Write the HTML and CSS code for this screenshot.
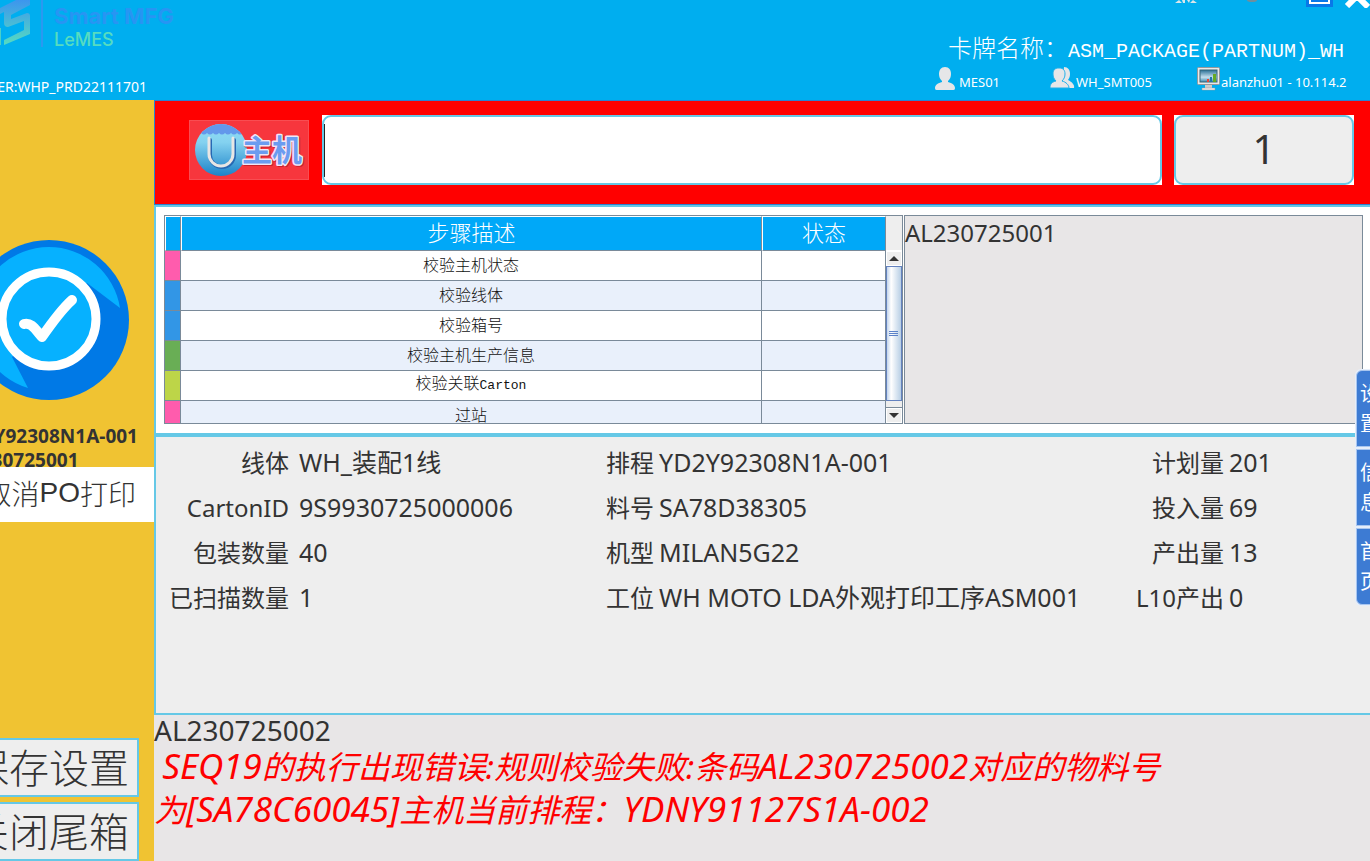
FILE: index.html
```html
<!DOCTYPE html>
<html lang="zh-CN">
<head>
<meta charset="utf-8">
<title>LeMES</title>
<link rel="stylesheet" href="styles.css">
</head>
<body>
<div class="app">
  <header class="header">
    <div class="brand">
      <div class="logo">
        <svg class="logo-mark" width="44" height="48" viewBox="0 0 44 48" aria-hidden="true">
          <defs><linearGradient id="lg" x1="0" y1="0" x2="0" y2="1"><stop offset="0" stop-color="#3a8ff2"/><stop offset="1" stop-color="#56dcc0"/></linearGradient></defs>
          <path d="M0 8 24 -4 30 0V5L11 15V19L27 13Q30 13 30 16V34L4 45V40L24 30V21L8 27Q4 27 4 23V12L0 14z" fill="url(#lg)"/>
          <path d="M0 28V45" stroke="#4bcfc8" stroke-width="2"/>
          <path d="M42 0V47" stroke="#2b98f0" stroke-width="2"/>
        </svg>
        <div class="logo-text"><span class="logo-top">Lenovo</span><span class="logo-top">Smart MFG</span><span class="logo-sub">LeMES</span></div>
      </div>
      <div class="server"><span>SERVER:WHP_PRD22111701</span></div>
    </div>
    <div class="status">
      <div class="window-tools">
        <button class="tool" aria-label="设置"><svg width="24" height="8" viewBox="0 0 24 8"><path d="M1 3 5 0 8 3zM8 0h3v3H9zM13 0h3l-1 3zM16 3l3-3 4 3z" fill="#dce6ea"/></svg></button>
        <button class="tool" aria-label="最小化"><svg width="24" height="8" viewBox="0 0 24 8"><ellipse cx="12" cy="0" rx="5" ry="2" fill="#6f8e9c"/></svg></button>
        <button class="tool" aria-label="最大化"><svg width="28" height="8" viewBox="0 0 28 8"><path d="M0 0H27V7H0z" fill="#0878e8"/><path d="M4 0V3H23V0" fill="none" stroke="#fff" stroke-width="2"/></svg></button>
        <button class="tool" aria-label="关闭"><svg width="26" height="8" viewBox="0 0 26 8"><path d="M3 6 13 -4 24 7" fill="none" stroke="#fff" stroke-width="6"/></svg></button>
      </div>
      <h1 class="card-name">卡牌名称：<span class="mono">ASM_PACKAGE(PARTNUM)_WH</span></h1>
      <ul class="session">
        <li class="user"><svg width="20" height="24" viewBox="0 0 20 24"><path d="M10 0c4 0 6 3 6 7 0 3-1 5-3 7v1c4 1 7 3 7 6 0 2-1 2-3 2H3c-2 0-3 0-3-2 0-3 3-5 7-6v-1C5 12 4 10 4 7c0-4 2-7 6-7z" fill="#e6e6e8"/></svg>MES01</li>
        <li class="group"><svg width="25" height="24" viewBox="0 0 25 24"><path d="M14 0c4 0 6 3 6 7 0 3-1 4-2 6 4 2 7 5 6 8H12z" fill="#e6e6e8"/><path d="M9 1c4 0 6 2 6 6 0 3-1 5-3 7 4 1 7 4 7 7H0c0-4 2-6 6-7-2-2-3-4-3-7 0-4 2-6 6-6z" fill="#e6e6e8" stroke="#20b0ea" stroke-width="1"/></svg>WH_SMT005</li>
        <li class="host"><svg width="23" height="24" viewBox="0 0 23 24"><defs><linearGradient id="mon" x1="0" y1="0" x2="0" y2="1"><stop offset="0" stop-color="#286f96"/><stop offset=".6" stop-color="#c6e0ee"/><stop offset="1" stop-color="#3c89b0"/></linearGradient></defs><path d="M8 18h7v4H8z" fill="#ccc"/><path d="M5 21h13v2H5z" fill="#eee" stroke="#999" stroke-width=".5"/><rect x=".5" y=".5" width="22" height="17" rx="1" fill="#e9e9e9" stroke="#96999c"/><rect x="3" y="3" width="17" height="12" fill="url(#mon)" stroke="#356679"/><path d="M10 12h2v3h-2z" fill="#e43"/><path d="M13 10h2v5h-2z" fill="#27a"/><path d="M16 7h3v8h-3z" fill="#6a2"/></svg><span class="host-name">alanzhu01 - 10.114.2</span></li>
      </ul>
    </div>
  </header>

  <aside class="sidebar">
    <svg class="ok-badge" width="160" height="160" viewBox="0 0 160 160" role="img" aria-label="OK">
      <circle cx="80" cy="80" r="80" fill="#0079e6"/>
      <path d="M151 68A72 72 0 1 0 59 148L43 117 118 43z" fill="#06b1ff"/>
      <circle cx="80" cy="79" r="47" fill="#06b1ff" stroke="#fff" stroke-width="9"/>
      <path d="M55 84C62 82 66 89 73 97 82 84 93 69 103 60" fill="none" stroke="#fff" stroke-width="10" stroke-linecap="round" stroke-linejoin="round"/>
    </svg>
    <div class="order">YD2Y92308N1A-001<br>AL230725001</div>
    <button class="po-button">取消<span class="arial">PO</span>打印</button>
    <div class="side-actions">
      <button class="side-button">保存设置</button>
      <button class="side-button">关闭尾箱</button>
    </div>
  </aside>

  <main class="main">
    <section class="scan">
      <label class="scan-label" for="scan">
        <svg width="120" height="60" viewBox="0 0 120 60">
          <defs>
            <linearGradient id="bag" x1="0" y1="0" x2="0" y2="1"><stop offset="0" stop-color="#8fdcf4"/><stop offset=".35" stop-color="#84d2f0"/><stop offset="1" stop-color="#1c82c8"/></linearGradient>
            <clipPath id="round"><circle cx="32" cy="30" r="26"/></clipPath>
          </defs>
          <rect width="120" height="60" fill="#f7363d"/>
          <rect x=".5" y=".5" width="119" height="59" fill="none" stroke="#f94d52"/>
          <circle cx="32" cy="30" r="26" fill="url(#bag)"/>
          <path clip-path="url(#round)" d="M5 0H60V13q-3 3-6 0-3 3-6 0-3 3-6 0-3 3-6 0-3 3-6 0-3 3-6 0-3 3-6 0-3 3-6 0z" fill="#6398eb"/>
          <path d="M21 20V35a12 12 0 0 0 24 0V20" fill="none" stroke="#2769b4" stroke-width="4" stroke-linecap="round"/>
          <path d="M20 18V34a12 12 0 0 0 24 0V18" fill="none" stroke="#e8e6e4" stroke-width="3" stroke-linecap="round"/>
          <text class="bag-text bag-shadow" x="54" y="42">主机</text>
          <text class="bag-text" x="53" y="41">主机</text>
        </svg>
      </label>
      <div class="field scan-field"><input id="scan" class="scan-input" type="text"></div>
      <div class="field count-field"><button class="count">1</button></div>
    </section>

    <section class="steps">
      <div class="steps-box">
        <table class="steps-table">
          <colgroup><col class="col-color"><col><col class="col-state"></colgroup>
          <thead><tr><th></th><th>步骤描述</th><th>状态</th></tr></thead>
          <tbody>
            <tr><td class="pink"></td><td>校验主机状态</td><td></td></tr>
            <tr><td class="blue"></td><td>校验线体</td><td></td></tr>
            <tr><td class="blue"></td><td>校验箱号</td><td></td></tr>
            <tr><td class="green"></td><td>校验主机生产信息</td><td></td></tr>
            <tr><td class="lime"></td><td>校验关联<span class="mono">Carton</span></td><td></td></tr>
            <tr><td class="pink"></td><td>过站</td><td></td></tr>
          </tbody>
        </table>
        <div class="scrollbar">
          <div class="corner"></div>
          <button class="arrow" aria-label="向上"><svg width="10" height="5" viewBox="0 0 10 5"><path d="M5 0 10 5H0z" fill="#333"/></svg></button>
          <div class="track"><div class="thumb"><svg width="10" height="7" viewBox="0 0 10 7"><path d="M0 1.500H9M0 3.500H9M0 5.500H9" stroke="#5b82c8"/></svg></div></div>
          <button class="arrow" aria-label="向下"><svg width="10" height="5" viewBox="0 0 10 5"><path d="M0 0H10L5 5z" fill="#333"/></svg></button>
        </div>
      </div>
      <div class="scanned">AL230725001</div>
    </section>

    <section class="info">
      <dl class="info-grid">
        <dt>线体</dt><dd>WH_装配1线</dd><dt>排程</dt><dd>YD2Y92308N1A-001</dd><dt>计划量</dt><dd>201</dd>
        <dt>CartonID</dt><dd>9S9930725000006</dd><dt>料号</dt><dd>SA78D38305</dd><dt>投入量</dt><dd>69</dd>
        <dt>包装数量</dt><dd>40</dd><dt>机型</dt><dd>MILAN5G22</dd><dt>产出量</dt><dd>13</dd>
        <dt>已扫描数量</dt><dd>1</dd><dt>工位</dt><dd>WH MOTO LDA外观打印工序ASM001</dd><dt>L10产出</dt><dd>0</dd>
      </dl>
    </section>

    <section class="message">
      <div class="barcode">AL230725002</div>
      <p class="error">&nbsp;<span class="code">SEQ19</span>的执行出现错误:规则校验失败:条码<span class="code">AL230725002</span>对应的物料号<br>为<span class="code">[SA78C60045]</span>主机当前排程：<span class="code">YDNY91127S1A-002</span></p>
    </section>
  </main>

  <nav class="dock">
    <button class="dock-tab">设<br>置</button>
    <button class="dock-tab">信<br>息</button>
    <button class="dock-tab">首<br>页</button>
  </nav>
</div>
</body>
</html>
```
FILE: styles.css
```css
* { box-sizing: border-box; }
body {
  margin: 0;
  font-family: "Noto Sans", "Noto Sans CJK SC", sans-serif;
  color: #333;
}
button { font: inherit; color: inherit; margin: 0; padding: 0; border: 0; background: none; }
svg { display: block; flex: none; }
.mono { font-family: "Liberation Mono", monospace; }
.arial { font-family: "Liberation Sans", sans-serif; }

.app {
  position: relative;
  display: grid;
  grid-template-columns: 154px 1fr;
  grid-template-rows: 100px 1fr;
  min-height: 100vh;
  overflow: hidden;
}

.header {
  grid-column: 1 / -1;
  display: flex;
  justify-content: space-between;
  background: #00aeef;
  color: #fff;
  overflow: hidden;
}
.brand { display: flex; flex-direction: column; justify-content: space-between; padding-bottom: 3px; }
.logo { display: flex; gap: 10px; height: 52px; align-items: flex-start; }
.logo-text {
  display: flex;
  flex-direction: column;
  margin-top: -20px;
  font-family: Inter, sans-serif;
  line-height: 24px;
  white-space: nowrap;
}
.logo-top { font-size: 22px; font-weight: 700; color: #2795f3; }
.logo-sub { font-size: 18px; font-weight: 500; color: #56dcc0; }
.server {
  width: 147px;
  display: flex;
  justify-content: flex-end;
  font-size: 14px;
  line-height: 20px;
  white-space: nowrap;
}
.status { display: flex; flex-direction: column; align-items: flex-end; padding-right: 22px; }
.window-tools { display: flex; gap: 42px; height: 32px; margin-right: -22px; }
.window-tools .tool { height: 8px; }
.window-tools .tool:last-child { margin-left: -32px; }
.card-name {
  height: 32px;
  margin: 0 4px 0 0;
  font-size: 24px;
  font-weight: 300;
  line-height: 32px;
  white-space: nowrap;
}
.card-name .mono { font-size: 20px; }
.session {
  display: flex;
  margin: 0;
  padding: 0;
  width: 413px;
  list-style: none;
  font-size: 13px;
  line-height: 30px;
  white-space: nowrap;
}
.session li { display: flex; padding-top: 3px; }
.user { width: 115px; gap: 4px; }
.group { width: 147px; gap: 1px; }
.host { flex: 1; gap: 1px; overflow: hidden; }
.host-name { overflow: hidden; }

.sidebar {
  display: flex;
  flex-direction: column;
  align-items: flex-end;
  background: #f0c332;
  overflow: hidden;
}
.ok-badge { margin: 140px 25px 24px 0; }
.order {
  height: 43px;
  padding-right: 16px;
  font-size: 19px;
  font-weight: 700;
  line-height: 24px;
  white-space: nowrap;
  overflow: hidden;
}
.po-button {
  flex: none;
  display: flex;
  justify-content: flex-end;
  align-items: center;
  width: 100%;
  height: 55px;
  padding: 0 18px 4px 0;
  background: #fff;
  font-size: 28px;
  font-weight: 300;
  white-space: nowrap;
}
.side-actions {
  display: flex;
  flex-direction: column;
  gap: 5px;
  margin: auto 15px 0 0;
}
.side-button {
  height: 59px;
  padding: 0 8px;
  border: 2px solid #65c8e6;
  background: #eee;
  font-size: 40px;
  font-weight: 300;
  line-height: 52px;
  white-space: nowrap;
}

.main { display: flex; flex-direction: column; min-width: 0; }
.scan {
  display: flex;
  gap: 12px;
  align-items: center;
  padding: 14px 16px 19px 34px;
  border: 1px solid #2b82d0;
  border-right: 0;
  background: #f00;
}
.scan-label { margin-right: 1px; }
.bag-text {
  font: 700 30px "Noto Sans CJK SC", sans-serif;
  fill: #6b9cf0;
  stroke: #f3e6f4;
  stroke-width: 3px;
  stroke-linejoin: round;
  paint-order: stroke;
}
.bag-shadow { fill: #c8202c; stroke: #c8202c; }
.field { height: 70px; background: #fff; }
.scan-field { flex: 1; }
.scan-input, .count {
  display: block;
  width: 100%;
  height: 100%;
  border: 2px solid #65c8e6;
  border-radius: 9px;
}
.scan-input {
  background: #fff linear-gradient(#222, #222) left center / 1px 53px no-repeat;
  font-size: 32px;
}
.count-field { width: 180px; }
.count { padding-bottom: 4px; background: #eee; font-size: 40px; }

.steps {
  display: flex;
  gap: 1px;
  padding: 8px 7px 9px 8px;
  border: 2px solid #65c8e6;
  border-right: 0;
  background: #fff;
}
.steps-box {
  flex: 740 1 0;
  display: flex;
  height: 209px;
  border: 1px solid #7a8a99;
  overflow: hidden;
}
.steps-table {
  flex: 1;
  table-layout: fixed;
  border-collapse: separate;
  border-spacing: 0;
  font-weight: 300;
  height: 0;
  color: #111;
}
.col-color { width: 16px; }
.col-state { width: 124px; }
.steps-table th, .steps-table td {
  padding: 0;
  border-right: 1px solid #7a8a99;
  border-bottom: 1px solid #7a8a99;
  text-align: center;
}
.steps-table th {
  height: 35px;
  padding-bottom: 3px;
  border-top: 1px solid #fff;
  border-left: 1px solid #fff;
  background: #00a8f8;
  color: #fff;
  font-size: 22px;
  font-weight: 300;
  line-height: 30px;
}
.steps-table td { height: 30px; padding-bottom: 2px; font-size: 16px; line-height: 24px; }
.steps-table td .mono { font-size: 13px; }
.steps-table tr:nth-child(even) td { background: #e9f0fb; }
.steps-table tr td.pink { background: #ff5cad; }
.steps-table tr td.blue { background: #3296e6; }
.steps-table tr td.green { background: #69ae55; }
.steps-table tr td.lime { background: #bdd548; }
.scrollbar { width: 16px; display: flex; flex-direction: column; background: #eee; }
.corner { height: 35px; border-bottom: 1px solid #fff; }
.arrow { height: 15px; display: flex; align-items: center; justify-content: center; border: 1px solid #fff; }
.track { flex: 1; padding-bottom: 6px; border-bottom: 1px solid #7a8a99; }
.thumb {
  height: 100%;
  display: flex;
  align-items: center;
  justify-content: center;
  border: 1px solid #6482bf;
  background: linear-gradient(90deg, #c3d5ec, #fff 30%, #b8cfe5);
}
.scanned {
  flex: 459 1 0;
  border: 1px solid #7a8a99;
  background: #e8e6e7;
  font-size: 24px;
  line-height: 34px;
}

.info {
  height: 280px;
  padding-top: 3px;
  border: 2px solid #65c8e6;
  border-right: 0;
  background: #eee;
}
.info-grid {
  display: grid;
  grid-template-columns: 143px 306fr 54px 477fr 93px 141fr;
  grid-auto-rows: 45px;
  margin: 0;
  font-size: 24px;
  line-height: 45px;
  white-space: nowrap;
}
.info-grid dt { padding-right: 5px; text-align: right; }
.info-grid dt:nth-of-type(3n + 1) { padding-right: 10px; }
.info-grid dd { margin: 0; min-width: 0; font-size: 25px; }

.message { flex: 1; background: #e8e6e7; }
.barcode { font-size: 28px; line-height: 30px; }
.error {
  margin: 0;
  color: #f00;
  font-size: 32px;
  font-style: italic;
  line-height: 43px;
  white-space: nowrap;
}
.code { font-size: 35px; line-height: 40px; }

.dock {
  position: absolute;
  top: 369px;
  right: 0;
  width: 15px;
  display: flex;
  flex-direction: column;
  gap: 2px;
  padding: 1px 0 1px 1px;
  border-radius: 6px 0 0 6px;
  background: #e6eefa;
  overflow: hidden;
}
.dock-tab {
  width: 30px;
  height: 77px;
  padding-left: 3px;
  border: 1px solid #a9c6ef;
  background: #3d7bd3;
  color: #fff;
  font-size: 20px;
  line-height: 30px;
  text-align: left;
}
.dock-tab:first-child { border-radius: 6px 0 0 0; }
.dock-tab:last-child { border-radius: 0 0 0 6px; }
```
